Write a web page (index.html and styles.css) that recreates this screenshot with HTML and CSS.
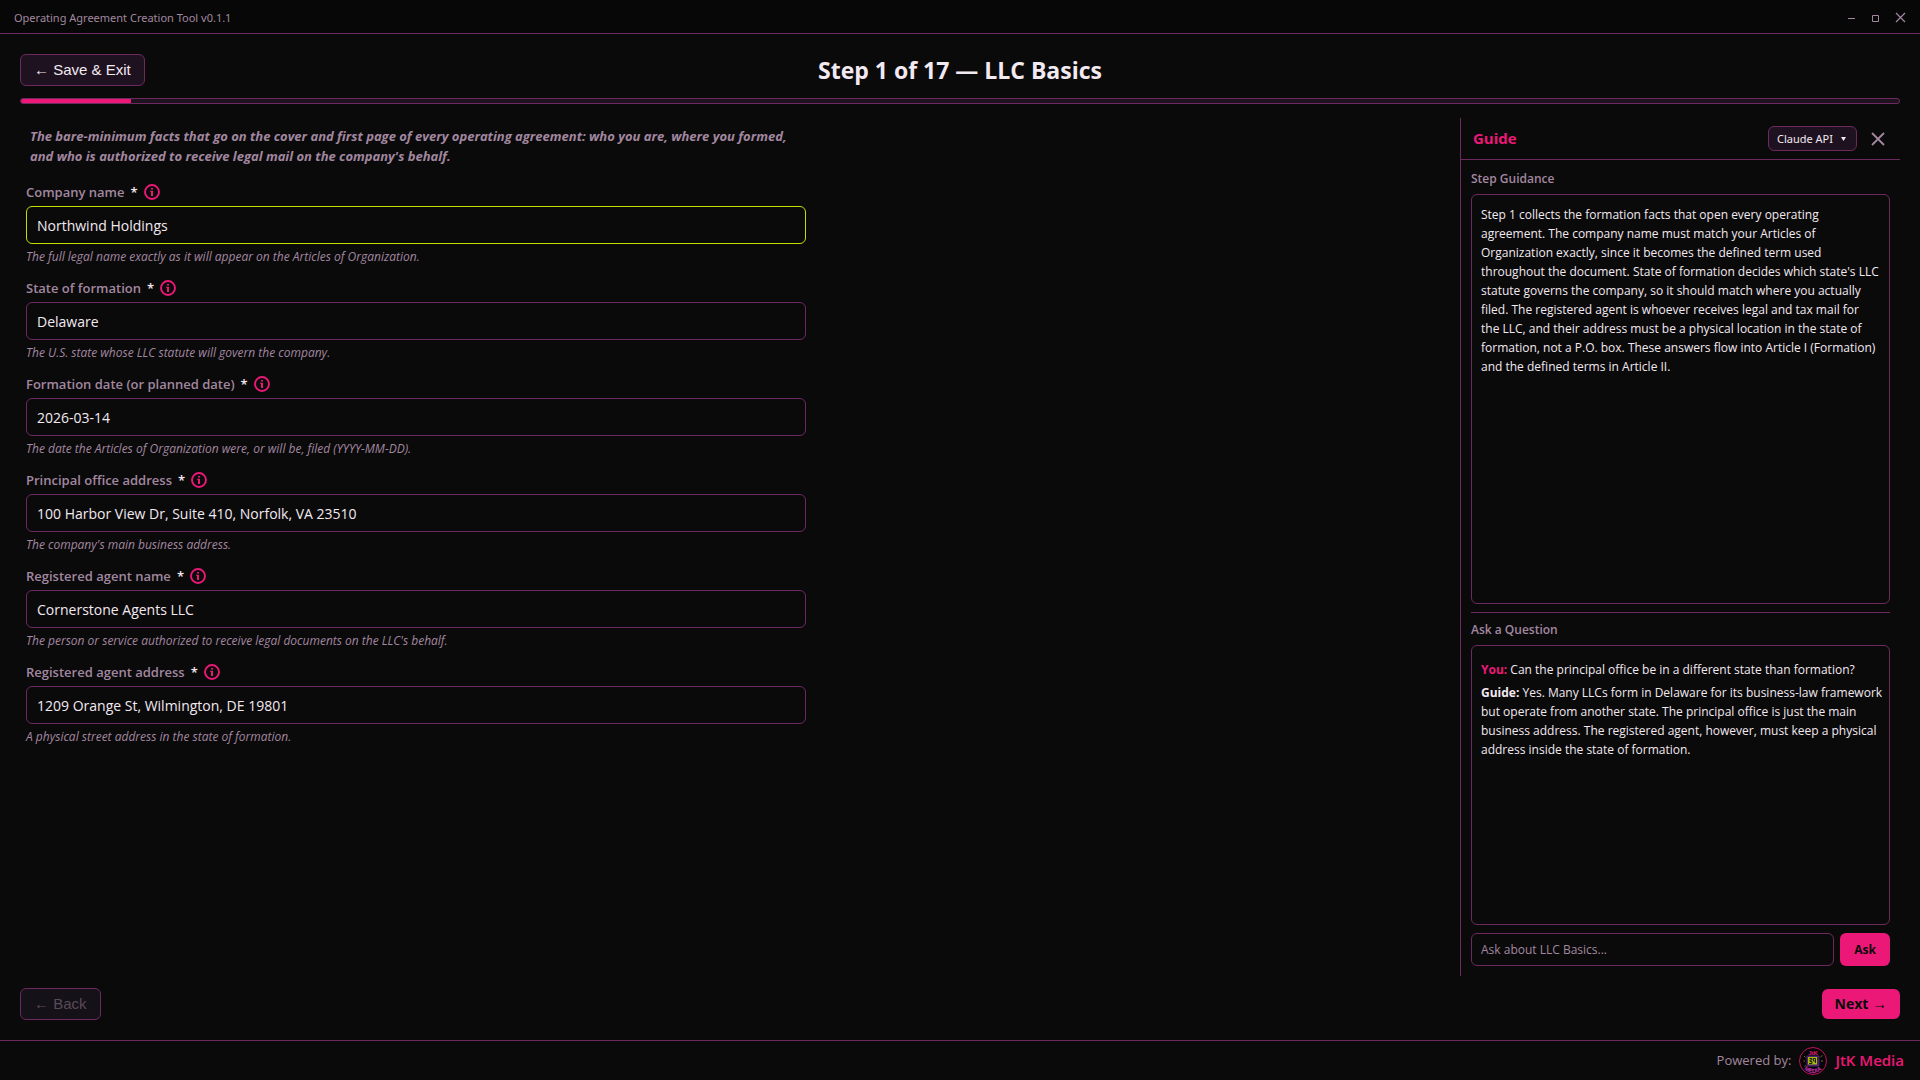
FILE: index.html
```html
<!DOCTYPE html>
<html lang="en">
<head>
<meta charset="utf-8">
<meta name="viewport" content="width=device-width, initial-scale=1">
<title>Operating Agreement Creation Tool v0.1.1</title>
<link rel="stylesheet" href="styles.css">
</head>
<body>
<svg class="sprite" aria-hidden="true">
  <symbol id="icon-info" viewBox="0 0 16 16">
    <circle cx="8" cy="8" r="7" fill="none" stroke="currentColor" stroke-width="1.9"/>
    <path d="M7 4h2v1.5H7zM6 6.7h3V12H7V7.8H6z" fill="currentColor"/>
  </symbol>
</svg>
<div class="app">
  <header class="titlebar">
    <span class="titlebar-name">Operating Agreement Creation Tool v0.1.1</span>
    <div class="window-controls">
      <button type="button" class="window-button" aria-label="Minimize"><svg width="8" height="10" viewBox="0 0 8 10"><path d="M0 5.5h7" stroke="currentColor"/></svg></button>
      <button type="button" class="window-button" aria-label="Maximize"><svg width="8" height="8" viewBox="0 0 8 8"><path d="M.5 1.5h6v6h-6z" fill="none" stroke="currentColor"/></svg></button>
      <button type="button" class="window-button" aria-label="Close"><svg width="11" height="11" viewBox="0 0 11 11"><path d="M1 1l9 9M10 1L1 10" fill="none" stroke="currentColor" stroke-width="1.2"/></svg></button>
    </div>
  </header>

  <div class="wizard">
    <div class="wizard-head">
      <button type="button" class="button button-quiet">← Save &amp; Exit</button>
      <h1 class="wizard-title">Step 1 of 17 — LLC Basics</h1>
    </div>
    <div class="progress" role="progressbar" aria-label="Progress" aria-valuemin="0" aria-valuemax="17" aria-valuenow="1"><div class="progress-fill" style="width:5.88%"></div></div>

    <div class="wizard-body">
      <main class="form-area">
        <p class="intro">The bare-minimum facts that go on the cover and first page of every operating agreement: who you are, where you formed, and who is authorized to receive legal mail on the company's behalf.</p>
        <form class="fields">
          <div class="field">
            <div class="field-label"><label for="company">Company name</label><span class="required">*</span><svg class="info"><use href="#icon-info"/></svg></div>
            <input class="input input-active" id="company" type="text" value="Northwind Holdings">
            <p class="hint">The full legal name exactly as it will appear on the Articles of Organization.</p>
          </div>
          <div class="field">
            <div class="field-label"><label for="state">State of formation</label><span class="required">*</span><svg class="info"><use href="#icon-info"/></svg></div>
            <input class="input" id="state" type="text" value="Delaware">
            <p class="hint">The U.S. state whose LLC statute will govern the company.</p>
          </div>
          <div class="field">
            <div class="field-label"><label for="date">Formation date (or planned date)</label><span class="required">*</span><svg class="info"><use href="#icon-info"/></svg></div>
            <input class="input" id="date" type="text" value="2026-03-14">
            <p class="hint">The date the Articles of Organization were, or will be, filed (YYYY-MM-DD).</p>
          </div>
          <div class="field">
            <div class="field-label"><label for="office">Principal office address</label><span class="required">*</span><svg class="info"><use href="#icon-info"/></svg></div>
            <input class="input" id="office" type="text" value="100 Harbor View Dr, Suite 410, Norfolk, VA 23510">
            <p class="hint">The company's main business address.</p>
          </div>
          <div class="field">
            <div class="field-label"><label for="agent">Registered agent name</label><span class="required">*</span><svg class="info"><use href="#icon-info"/></svg></div>
            <input class="input" id="agent" type="text" value="Cornerstone Agents LLC">
            <p class="hint">The person or service authorized to receive legal documents on the LLC's behalf.</p>
          </div>
          <div class="field">
            <div class="field-label"><label for="agent-address">Registered agent address</label><span class="required">*</span><svg class="info"><use href="#icon-info"/></svg></div>
            <input class="input" id="agent-address" type="text" value="1209 Orange St, Wilmington, DE 19801">
            <p class="hint">A physical street address in the state of formation.</p>
          </div>
        </form>
      </main>

      <aside class="guide">
        <div class="guide-head">
          <h2 class="guide-title">Guide</h2>
          <div class="picker">
            <select class="picker-select" aria-label="Guide provider"><option>Claude API</option></select>
            <svg class="picker-arrow" width="5" height="4" viewBox="0 0 5 4"><path d="M0 0h5L2.5 4z" fill="currentColor"/></svg>
          </div>
          <button type="button" class="guide-close" aria-label="Close guide"><svg width="14" height="14" viewBox="0 0 14 14"><path d="M1 1l12 12M13 1L1 13" fill="none" stroke="currentColor" stroke-width="1.8"/></svg></button>
        </div>
        <div class="guide-body">
          <h3 class="guide-label">Step Guidance</h3>
          <div class="guide-box guidance">
            <p>Step 1 collects the formation facts that open every operating agreement. The company name must match your Articles of Organization exactly, since it becomes the defined term used throughout the document. State of formation decides which state's LLC statute governs the company, so it should match where you actually filed. The registered agent is whoever receives legal and tax mail for the LLC, and their address must be a physical location in the state of formation, not a P.O. box. These answers flow into Article I (Formation) and the defined terms in Article II.</p>
          </div>
          <hr class="guide-rule">
          <h3 class="guide-label">Ask a Question</h3>
          <div class="guide-box chat">
            <p><strong class="you">You:</strong> Can the principal office be in a different state than formation?</p>
            <p><strong>Guide:</strong> Yes. Many LLCs form in Delaware for its business-law framework but operate from another state. The principal office is just the main business address. The registered agent, however, must keep a physical address inside the state of formation.</p>
          </div>
          <form class="ask">
            <input class="ask-input" type="text" aria-label="Ask a question" placeholder="Ask about LLC Basics...">
            <button type="button" class="ask-button">Ask</button>
          </form>
        </div>
      </aside>
    </div>

    <nav class="wizard-nav">
      <button type="button" class="button button-quiet" disabled>← Back</button>
      <button type="button" class="button button-next">Next <span class="arrow">→</span></button>
    </nav>
  </div>

  <footer class="footer">
    <span>Powered by:</span>
    <svg class="logo" width="28" height="28" viewBox="0 0 56 56" role="img" aria-label="JtK Media logo">
      <circle cx="28" cy="28" r="27" fill="#050505" stroke="#c0145f" stroke-width="2"/>
      <path d="M13 21l-3-3M12 28H9M43 20l4-3M44 28h4M14 37l-3 2" stroke="#66701a" stroke-width="2"/>
      <rect x="15" y="17" width="26" height="22" rx="2" fill="#4b2170"/>
      <rect x="18" y="20" width="18" height="15" fill="#a8b80e"/>
      <path d="M21 23h5v3h-4v3h4v4M29 23h4v5h-4zM33 27v5M20 33h6M38 22v3" fill="none" stroke="#1b2405" stroke-width="2"/>
      <path id="logo-arc" d="M6 41Q28 63 50 41" fill="none"/>
      <text class="logo-text" x="28" y="15" text-anchor="middle" fill="#e0187a">JtK</text>
      <text class="logo-text" fill="#c932b4" text-anchor="middle"><textPath href="#logo-arc" startOffset="50%">MEDIA</textPath></text>
    </svg>
    <a class="brand" href="#">JtK Media</a>
  </footer>
</div>
</body>
</html>
```
FILE: styles.css
```css
:root {
  --bg: #0a0a0a;
  --surface: #1e1220;
  --line: #6e2a5e;
  --pink: #ec1877;
  --lime: #c8dc00;
  --muted: #a287a0;
  --text: #f3e9f1;
}

* { box-sizing: border-box; }

body {
  margin: 0;
  background: var(--bg);
  color: var(--text);
  font: 12px/19px "Open Sans", "Noto Sans", sans-serif;
}

h1, h2, h3, p { margin: 0; }
button, input, select { font: inherit; color: inherit; }
button { cursor: pointer; }
.sprite { display: none; }

.app {
  display: flex;
  flex-direction: column;
  min-height: 100vh;
}

/* Window title bar */
.titlebar {
  display: flex;
  align-items: center;
  justify-content: space-between;
  height: 34px;
  padding: 2px 8px 0 14px;
  border-bottom: 1px solid var(--line);
  background: #070707;
  color: var(--muted);
  font-family: "Noto Sans", "Open Sans", sans-serif;
  font-size: 11px;
}
.window-controls { display: flex; }
.window-button {
  display: grid;
  place-items: center;
  width: 24px;
  height: 24px;
  padding: 0;
  border: 0;
  background: none;
}

/* Wizard frame */
.wizard {
  flex: 1;
  display: flex;
  flex-direction: column;
  padding: 20px;
}
.wizard-head {
  display: grid;
  grid-template-columns: 1fr auto 1fr;
  align-items: center;
  justify-items: start;
}
.wizard-title {
  font-size: 23px;
  line-height: 32px;
  font-weight: 700;
}
.button {
  height: 32px;
  padding: 0 13px;
  border: 1px solid var(--line);
  border-radius: 6px;
  font: 15px/20px "Liberation Sans", Arial, sans-serif;
}
.button-quiet { background: var(--surface); }
.button-quiet:disabled {
  background: #151118;
  color: #5a4a58;
  cursor: default;
}
.button-next {
  height: 30px;
  border: 0;
  background: var(--pink);
  color: var(--bg);
  font: 700 14px/20px "Open Sans", "Noto Sans", sans-serif;
}
.arrow { font: 15px/20px "Liberation Sans", Arial, sans-serif; }

.progress {
  height: 6px;
  margin-top: 12px;
  border: 1px solid var(--line);
  border-radius: 3px;
  background: var(--surface);
  overflow: hidden;
}
.progress-fill {
  height: 100%;
  background: var(--pink);
}

.wizard-body {
  flex: 1;
  display: grid;
  grid-template-columns: minmax(0, 1fr) 440px;
  margin-top: 14px;
}
.wizard-nav {
  display: flex;
  align-items: center;
  justify-content: space-between;
  margin-top: 12px;
}

/* Form */
.form-area {
  max-width: 792px;
  padding: 8px 6px;
}
.intro {
  padding: 0 4px;
  color: var(--muted);
  font-size: 13px;
  line-height: 20px;
  font-weight: 700;
  font-style: italic;
}
.fields {
  display: grid;
  gap: 12px;
  margin-top: 16px;
}
.field-label {
  display: flex;
  align-items: center;
  gap: 6px;
  height: 20px;
  margin-bottom: 4px;
  color: var(--muted);
  font-size: 13px;
  font-weight: 600;
}
.required { color: var(--text); }
.info {
  width: 16px;
  height: 16px;
  color: var(--pink);
}
.input {
  display: block;
  width: 100%;
  height: 38px;
  padding: 0 10px;
  border: 1px solid var(--line);
  border-radius: 6px;
  background: transparent;
  font-size: 14px;
}
.input-active { border-color: var(--lime); }
.hint {
  margin-top: 4px;
  height: 18px;
  color: var(--muted);
  font-size: 12px;
  line-height: 18px;
  font-style: italic;
}

/* Guide panel */
.guide {
  display: flex;
  flex-direction: column;
  border-left: 1px solid var(--line);
}
.guide-head {
  display: flex;
  align-items: center;
  height: 42px;
  padding: 0 10px 0 12px;
  border-bottom: 1px solid var(--line);
}
.guide-title {
  flex: 1;
  color: var(--pink);
  font-size: 15px;
  font-weight: 700;
}
.picker {
  display: grid;
  align-items: center;
}
.picker-select,
.picker-arrow { grid-area: 1 / 1; }
.picker-select {
  appearance: none;
  width: 89px;
  height: 25px;
  padding: 0 8px;
  border: 1px solid var(--line);
  border-radius: 6px;
  background: var(--surface);
  font-family: "Noto Sans", "Open Sans", sans-serif;
  font-size: 11px;
}
.picker-arrow {
  justify-self: end;
  margin-right: 11px;
  pointer-events: none;
}
.guide-close {
  display: grid;
  place-items: center;
  width: 24px;
  height: 24px;
  margin-left: 9px;
  padding: 0;
  border: 0;
  background: none;
  color: var(--muted);
}
.guide-body {
  flex: 1;
  display: flex;
  flex-direction: column;
  padding: 9px 10px 10px;
}
.guide-label {
  margin-bottom: 6px;
  color: var(--muted);
  font-size: 12px;
  line-height: 19px;
  font-weight: 600;
}
.guide-box {
  border: 1px solid var(--line);
  border-radius: 6px;
}
.guidance {
  flex: 14;
  padding: 10px 9px;
}
.chat {
  flex: 9;
  padding: 14px 4px 14px 9px;
}
.chat p + p { margin-top: 4px; }
.you { color: var(--pink); }
.guide-rule {
  width: 100%;
  margin: 8px 0 7px;
  border: 0;
  border-top: 1px solid var(--line);
}
.ask {
  display: flex;
  gap: 6px;
  margin-top: 8px;
}
.ask-input {
  flex: 1;
  min-width: 0;
  height: 33px;
  padding: 0 9px;
  border: 1px solid var(--line);
  border-radius: 6px;
  background: transparent;
}
.ask-input::placeholder {
  color: var(--muted);
  opacity: 1;
}
.ask-button {
  width: 50px;
  height: 33px;
  padding: 0;
  border: 0;
  border-radius: 6px;
  background: var(--pink);
  color: var(--bg);
  font-weight: 700;
}

/* Footer */
.footer {
  display: flex;
  align-items: center;
  justify-content: flex-end;
  gap: 8px;
  height: 40px;
  padding: 0 16px;
  border-top: 1px solid var(--line);
  color: var(--muted);
  font-size: 13px;
}
.brand {
  color: var(--pink);
  font-size: 15px;
  font-weight: 600;
  text-decoration: none;
}
.logo-text {
  font: 700 12px "Liberation Sans", sans-serif;
}
```
